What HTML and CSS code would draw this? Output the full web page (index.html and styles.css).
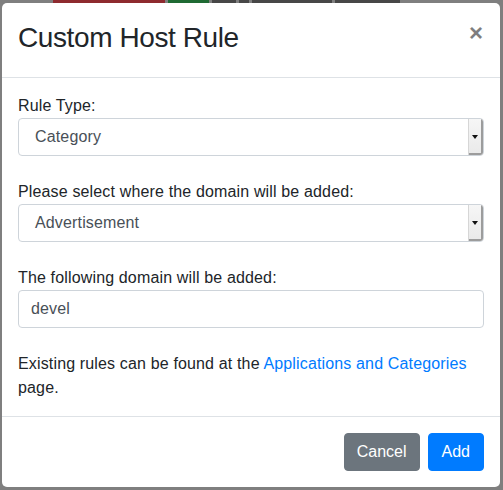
FILE: index.html
```html
<!DOCTYPE html>
<html lang="en">
<head>
<meta charset="utf-8">
<title>Custom Host Rule</title>
<link rel="stylesheet" href="styles.css">
</head>
<body>
<div class="backdrop-strip">
  <span class="chip chip-red"></span>
  <span class="chip chip-green"></span>
  <span class="chip chip-dark w24"></span>
  <span class="chip chip-dark w10"></span>
  <span class="chip chip-dark w80"></span>
  <span class="chip chip-dark w65"></span>
</div>
<div class="modal">
  <div class="modal-header">
    <h3 class="modal-title">Custom Host Rule</h3>
    <button class="close" type="button" aria-label="Close">&times;</button>
  </div>
  <div class="modal-body">
    <div class="form-group">
      <label class="label">Rule Type:</label>
      <div class="select"><span class="select-value">Category</span><span class="select-arrow"><span class="tri"></span></span></div>
    </div>
    <div class="form-group">
      <label class="label">Please select where the domain will be added:</label>
      <div class="select"><span class="select-value">Advertisement</span><span class="select-arrow"><span class="tri"></span></span></div>
    </div>
    <div class="form-group">
      <label class="label">The following domain will be added:</label>
      <div class="input">devel</div>
    </div>
    <p class="note">Existing rules can be found at the <a class="link" href="#">Applications and Categories</a> page.</p>
  </div>
  <div class="modal-footer">
    <button class="btn btn-secondary" type="button">Cancel</button>
    <button class="btn btn-primary" type="button">Add</button>
  </div>
</div>
</body>
</html>
```

FILE: styles.css
```css
* { box-sizing: border-box; }
html, body { margin: 0; padding: 0; }
body {
  width: 503px;
  height: 490px;
  overflow: hidden;
  background: #7f7f7f;
  font-family: "Liberation Sans", Arial, sans-serif;
  font-size: 16px;
  line-height: 24px;
  letter-spacing: 0.15px;
  color: #212529;
}
.backdrop-strip {
  display: flex;
  height: 3px;
  padding-left: 53px;
  gap: 3px;
}
.chip { display: block; height: 3px; }
.chip-red { width: 112px; background: #8e2a2f; }
.chip-green { width: 41px; background: #1f6a33; }
.chip-dark { background: #474747; }
.w24 { width: 24px; }
.w10 { width: 10px; }
.w80 { width: 80px; }
.w65 { width: 65px; }

.modal {
  margin-left: 2px;
  width: 498px;
  height: 484px;
  background: #fff;
  border-radius: 5px;
  display: flex;
  flex-direction: column;
}
.modal-header {
  display: flex;
  align-items: flex-start;
  justify-content: space-between;
  height: 75px;
  padding: 14px 17px 18px 16px;
  border-bottom: 1px solid #dee2e6;
}
.modal-title {
  margin: 0;
  font-size: 28px;
  line-height: 42px;
  font-weight: 400;
  letter-spacing: -0.4px;
  color: #212529;
}
.close {
  margin-top: 4px;
  padding: 0;
  border: 0;
  background: transparent;
  font-family: "Liberation Sans", Arial, sans-serif;
  font-size: 24px;
  line-height: 24px;
  font-weight: 700;
  color: #000;
  opacity: 0.5;
}
.modal-body {
  padding: 16px;
  display: flex;
  flex-direction: column;
  gap: 24px;
}
.form-group { display: flex; flex-direction: column; }
.label { display: block; }
.select {
  display: flex;
  height: 38px;
  border: 1px solid #ced4da;
  border-radius: 4px;
  overflow: hidden;
  color: #495057;
}
.select-value {
  flex: 1;
  padding-left: 16px;
  line-height: 36px;
}
.select-arrow {
  width: 15px;
  display: flex;
  align-items: center;
  justify-content: center;
  background: linear-gradient(#f6f6f6, #e9e9e9);
  border-left: 1px solid #d6d6d6;
  box-shadow: inset -2px -2px 0 #9c9c9c;
  padding-right: 2px;
}
.tri {
  width: 0;
  height: 0;
  border-left: 3px solid transparent;
  border-right: 3px solid transparent;
  border-top: 4px solid #111;
}
.input {
  height: 38px;
  border: 1px solid #ced4da;
  border-radius: 4px;
  padding-left: 12px;
  line-height: 36px;
  color: #495057;
}
.note { margin: 0; }
.link { color: #007bff; text-decoration: none; }
.modal-footer {
  flex: 1;
  display: flex;
  justify-content: flex-end;
  align-items: flex-start;
  gap: 8px;
  padding: 16px;
  border-top: 1px solid #dee2e6;
}
.btn {
  height: 38px;
  padding: 0 12px;
  border: 1px solid transparent;
  border-radius: 4px;
  font-family: "Liberation Sans", Arial, sans-serif;
  font-size: 16px;
  line-height: 36px;
  letter-spacing: 0;
  color: #fff;
}
.btn-secondary { background: #6c757d; border-color: #6c757d; }
.btn-primary { background: #007bff; border-color: #007bff; padding: 0 13px; }
```
